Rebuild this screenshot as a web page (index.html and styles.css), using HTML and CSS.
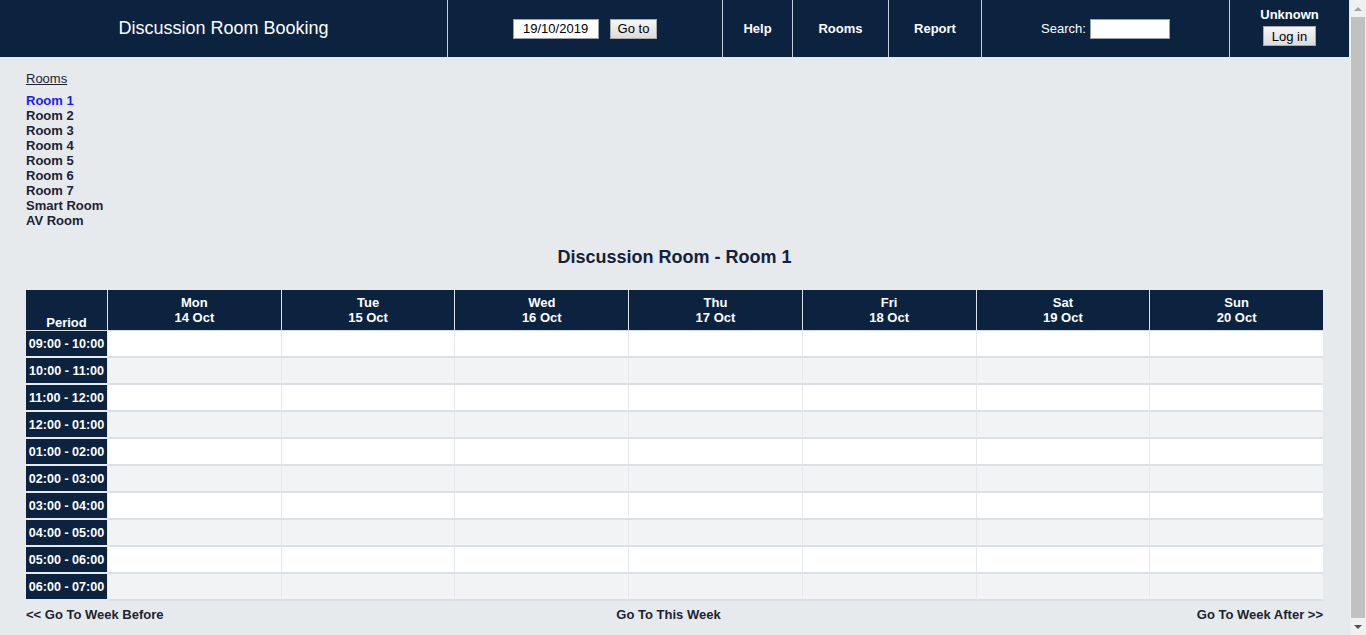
FILE: index.html
```html
<!DOCTYPE html>
<html lang="en">
<head>
<meta charset="utf-8">
<title>Discussion Room Booking</title>
<link rel="stylesheet" href="styles.css">
</head>
<body>
<div class="page">
  <header class="topbar">
    <div class="cell brand">Discussion Room Booking</div>
    <div class="cell goto">
      <input class="date-input" type="text" value="19/10/2019">
      <button class="btn">Go to</button>
    </div>
    <div class="cell nav help">Help</div>
    <div class="cell nav rooms">Rooms</div>
    <div class="cell nav report">Report</div>
    <div class="cell search">
      <label class="search-label">Search:</label>
      <input class="search-input" type="text">
    </div>
    <div class="cell user">
      <div class="user-name">Unknown</div>
      <button class="btn login">Log in</button>
    </div>
  </header>

  <main class="content">
    <a class="rooms-link" href="#">Rooms</a>
    <ul class="room-list">
      <li class="current">Room 1</li>
      <li>Room 2</li>
      <li>Room 3</li>
      <li>Room 4</li>
      <li>Room 5</li>
      <li>Room 6</li>
      <li>Room 7</li>
      <li>Smart Room</li>
      <li>AV Room</li>
    </ul>

    <h2 class="page-title">Discussion Room - Room 1</h2>

    <table class="timetable">
      <colgroup>
        <col class="col-period">
        <col><col><col><col><col><col><col>
      </colgroup>
      <thead>
        <tr>
          <th class="period-head">Period</th>
          <th>Mon<br>14 Oct</th>
          <th>Tue<br>15 Oct</th>
          <th>Wed<br>16 Oct</th>
          <th>Thu<br>17 Oct</th>
          <th>Fri<br>18 Oct</th>
          <th>Sat<br>19 Oct</th>
          <th>Sun<br>20 Oct</th>
        </tr>
      </thead>
      <tbody>
        <tr><td class="period">09:00 - 10:00</td><td></td><td></td><td></td><td></td><td></td><td></td><td></td></tr>
        <tr class="alt"><td class="period">10:00 - 11:00</td><td></td><td></td><td></td><td></td><td></td><td></td><td></td></tr>
        <tr><td class="period">11:00 - 12:00</td><td></td><td></td><td></td><td></td><td></td><td></td><td></td></tr>
        <tr class="alt"><td class="period">12:00 - 01:00</td><td></td><td></td><td></td><td></td><td></td><td></td><td></td></tr>
        <tr><td class="period">01:00 - 02:00</td><td></td><td></td><td></td><td></td><td></td><td></td><td></td></tr>
        <tr class="alt"><td class="period">02:00 - 03:00</td><td></td><td></td><td></td><td></td><td></td><td></td><td></td></tr>
        <tr><td class="period">03:00 - 04:00</td><td></td><td></td><td></td><td></td><td></td><td></td><td></td></tr>
        <tr class="alt"><td class="period">04:00 - 05:00</td><td></td><td></td><td></td><td></td><td></td><td></td><td></td></tr>
        <tr><td class="period">05:00 - 06:00</td><td></td><td></td><td></td><td></td><td></td><td></td><td></td></tr>
        <tr class="alt"><td class="period">06:00 - 07:00</td><td></td><td></td><td></td><td></td><td></td><td></td><td></td></tr>
      </tbody>
    </table>

    <nav class="week-nav">
      <a href="#" class="week-link prev">&lt;&lt; Go To Week Before</a>
      <a href="#" class="week-link this">Go To This Week</a>
      <a href="#" class="week-link next">Go To Week After &gt;&gt;</a>
    </nav>
  </main>
</div>
<div class="scrollbar" aria-hidden="true">
  <div class="sb-btn sb-up"><span class="arrow-up"></span></div>
  <div class="sb-track"><div class="sb-thumb"></div></div>
  <div class="sb-btn sb-down"><span class="arrow-down"></span></div>
</div>
</body>
</html>
```

FILE: styles.css
```css
* { box-sizing: border-box; }

html, body {
  margin: 0;
  padding: 0;
  height: 635px;
  overflow: hidden;
}

body {
  display: flex;
  background: #e7eaed;
  font-family: "Liberation Sans", Arial, sans-serif;
  color: #1c2333;
  font-size: 13px;
}

.page {
  flex: 1;
  min-width: 0;
}

/* fake browser scrollbar */
.scrollbar {
  width: 17px;
  height: 635px;
  display: flex;
  flex-direction: column;
  background: #f0f0f0;
  border-left: 1px solid #e8e8e8;
}

.sb-btn {
  height: 17px;
  display: flex;
  align-items: center;
  justify-content: center;
}

.arrow-up {
  width: 0;
  height: 0;
  border-left: 4px solid transparent;
  border-right: 4px solid transparent;
  border-bottom: 4px solid #a3a3a3;
}

.arrow-down {
  width: 0;
  height: 0;
  border-left: 4px solid transparent;
  border-right: 4px solid transparent;
  border-top: 4px solid #505050;
}

.sb-track {
  flex: 1;
  display: flex;
  padding: 0 1px 0 1px;
}

.sb-thumb {
  flex: 1;
  background: #c1c1c1;
}

/* header */
.topbar {
  display: flex;
  height: 57px;
  background: #0c2340;
  color: #ffffff;
}

.cell {
  display: flex;
  align-items: center;
  justify-content: center;
  height: 57px;
  border-left: 1px solid #c9ced6;
}

.brand {
  width: 447px;
  border-left: none;
  font-size: 18px;
}

.goto { width: 275px; gap: 11px; }
.help { width: 70px; }
.rooms { width: 96px; }
.report { width: 93px; }
.search { width: 248px; gap: 4px; }
.user { flex: 1; flex-direction: column; justify-content: flex-start; padding-top: 7px; }

.nav {
  font-size: 13px;
  font-weight: bold;
}

.date-input,
.search-input {
  height: 20px;
  border: 1px solid #9aa0a8;
  background: #fff;
  font-family: "Liberation Sans", Arial, sans-serif;
  font-size: 13px;
  color: #000;
  padding: 0 3px;
}

.date-input { width: 86px; text-align: center; }
.search-input { width: 80px; }

.btn {
  height: 20px;
  padding: 0 7px;
  border: 1px solid #a9a9a9;
  background: linear-gradient(#f6f6f6, #dcdcdc);
  font-family: "Liberation Sans", Arial, sans-serif;
  font-size: 13px;
  color: #000;
  border-radius: 0;
}

.search-label { font-size: 13px; }

.user-name {
  font-size: 13px;
  font-weight: bold;
  line-height: 15px;
  margin-bottom: 4px;
}

.login { width: 53px; padding: 0; }

/* main */
.content {
  padding: 14px 26px 0 26px;
}

.rooms-link {
  display: inline-block;
  color: #1c2333;
  text-decoration: underline;
  font-size: 13px;
  line-height: 15px;
}

.room-list {
  list-style: none;
  margin: 7px 0 0 0;
  padding: 0;
}

.room-list li {
  font-size: 13px;
  font-weight: bold;
  line-height: 15px;
  color: #1c2333;
}

.room-list li.current { color: #1a1aff; }

.page-title {
  margin: 18px 0 0 0;
  text-align: center;
  font-size: 18px;
  line-height: 22px;
  font-weight: bold;
  color: #14213a;
}

.timetable {
  width: 100%;
  margin-top: 22px;
  border-collapse: separate;
  border-spacing: 0;
  table-layout: fixed;
}

.col-period { width: 81px; }

.timetable th {
  height: 41px;
  background: #0c2340;
  color: #fff;
  font-size: 13px;
  font-weight: bold;
  line-height: 15px;
  text-align: center;
  vertical-align: middle;
  padding: 0;
  border-left: 1px solid #dfe3e8;
  border-bottom: 1px solid #d8dce1;
}

.timetable th.period-head {
  border-left: none;
  vertical-align: bottom;
  padding-bottom: 0;
}

.timetable td {
  height: 27px;
  padding: 0;
  background: #ffffff;
  border-left: 1px solid #e6e8eb;
  border-bottom: 2px solid #dcdfe3;
}

.timetable tr.alt td { background: #f2f3f5; }

.timetable td.period,
.timetable tr.alt td.period {
  background: #0c2340;
  color: #fff;
  font-size: 12.6px;
  font-weight: bold;
  text-align: center;
  border-left: none;
  border-bottom: 2px solid #e7eaed;
  white-space: nowrap;
}

.week-nav {
  display: grid;
  grid-template-columns: 1fr auto 1fr;
  padding-top: 6px;
}

.week-link {
  color: #1c2333;
  text-decoration: none;
  font-size: 13px;
  font-weight: bold;
  line-height: 15px;
}

.week-link.prev { justify-self: start; }
.week-link.this { justify-self: center; margin-right: 12px; }
.week-link.next { justify-self: end; }
```
